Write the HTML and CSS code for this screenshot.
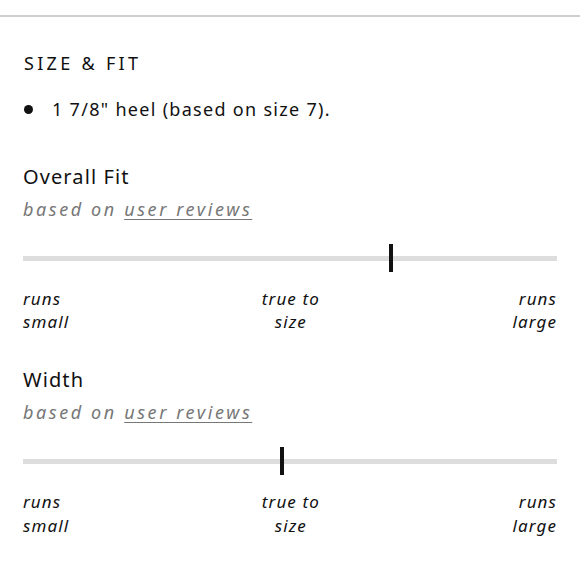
FILE: index.html
```html
<!DOCTYPE html>
<html>
<head>
<meta charset="utf-8">
<link rel="stylesheet" href="styles.css">
</head>
<body>
<div class="rule"></div>
<section class="panel">
  <h2 class="heading">SIZE &amp; FIT</h2>
  <ul class="details">
    <li class="detail">1 7/8" heel (based on size 7).</li>
  </ul>
  <div class="fit">
    <h3 class="fit-title">Overall Fit</h3>
    <p class="fit-sub">based on <a href="#" class="link">user reviews</a></p>
    <div class="track"><span class="marker" style="left: 69%"></span></div>
    <div class="labels">
      <span class="lab lab-left">runs<br>small</span>
      <span class="lab lab-mid">true to<br>size</span>
      <span class="lab lab-right">runs<br>large</span>
    </div>
  </div>
  <div class="fit">
    <h3 class="fit-title">Width</h3>
    <p class="fit-sub">based on <a href="#" class="link">user reviews</a></p>
    <div class="track"><span class="marker" style="left: 48.5%"></span></div>
    <div class="labels">
      <span class="lab lab-left">runs<br>small</span>
      <span class="lab lab-mid">true to<br>size</span>
      <span class="lab lab-right">runs<br>large</span>
    </div>
  </div>
</section>
</body>
</html>
```
FILE: styles.css
```css
html, body {
  margin: 0;
  padding: 0;
  background: #fff;
}
body {
  font-family: "Noto Sans", "Open Sans", sans-serif;
  color: #111;
}
.rule {
  margin-top: 15px;
  height: 2px;
  background: #cfcfcf;
}
.panel {
  padding: 0 23px;
}
.heading {
  margin: 35px 0 0 1px;
  font-size: 18px;
  font-weight: 400;
  letter-spacing: 3.3px;
  line-height: 22px;
}
.details {
  margin: 24px 0 0;
  padding: 0;
  list-style: none;
}
.detail {
  display: flex;
  align-items: center;
  gap: 19px;
  font-size: 18px;
  line-height: 22px;
  letter-spacing: 1.3px;
}
.detail::before {
  content: "";
  flex: none;
  width: 9px;
  height: 9px;
  margin-left: 1px;
  border-radius: 50%;
  background: #111;
}
.fit {
  margin-top: 44px;
}
.fit + .fit {
  margin-top: 34px;
}
.fit-title {
  margin: 0;
  font-size: 20px;
  font-weight: 400;
  line-height: 26px;
  letter-spacing: 1.1px;
}
.fit-sub {
  margin: 8px 0 0;
  font-size: 18px;
  font-style: italic;
  color: #777;
  letter-spacing: 2.6px;
  line-height: 22px;
}
.link {
  color: #777;
  text-decoration: underline;
  text-decoration-thickness: 1px;
  text-underline-offset: 3px;
}
.track {
  position: relative;
  margin-top: 36px;
  height: 5px;
  background: #dddddd;
}
.marker {
  position: absolute;
  top: -12px;
  width: 4px;
  height: 28px;
  margin-left: -2px;
  background: #111;
}
.labels {
  display: flex;
  justify-content: space-between;
  margin-top: 26px;
  font-size: 17px;
  font-style: italic;
  line-height: 23.2px;
  letter-spacing: 1.1px;
  color: #111;
}
.lab-left { text-align: left; }
.lab-mid { text-align: center; }
.lab-right { text-align: right; }
```
